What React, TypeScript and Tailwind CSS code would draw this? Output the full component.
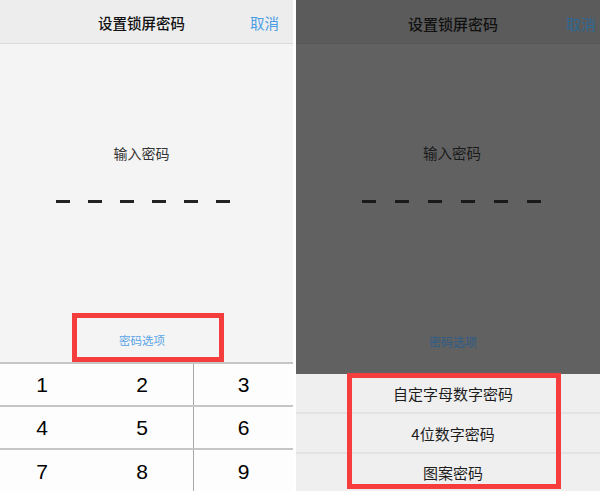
import React from "react";

const cjk = { fontFamily: '"Noto Sans CJK SC", "Noto Sans", sans-serif' };
const num = { fontFamily: '"Liberation Sans", Arial, sans-serif' };

function Dashes({ color, gap, offset }: { color: string; gap: string; offset: string }) {
  return (
    <div className={`flex h-[3px] ${gap} ${offset}`}>
      {[0, 1, 2, 3, 4, 5].map((i) => (
        <div key={i} className={`h-[2.5px] w-[14px] ${color}`} />
      ))}
    </div>
  );
}

function KeyRow({ keys, last }: { keys: string[]; last?: boolean }) {
  return (
    <div className={`flex h-[43px] ${last ? "" : "border-b-2 border-[#c6c6c6]"}`}>
      <div className="flex w-[91px] items-center justify-center pr-[7px] text-[21px] text-black" style={num}>
        {keys[0]}
      </div>
      <div className="flex w-[102px] items-center justify-center text-[21px] text-black" style={num}>
        {keys[1]}
      </div>
      <div className="flex w-[100px] items-center justify-center border-l border-[#a8a8a8] text-[21px] text-black" style={num}>
        {keys[2]}
      </div>
    </div>
  );
}

export default function App() {
  return (
    <div className="flex h-[491px] w-[600px] overflow-hidden bg-white" style={cjk}>
      {/* Left panel */}
      <div className="flex h-full w-[293px] flex-col bg-[#f4f4f4]">
        <div className="flex h-[44px] shrink-0 items-center border-b border-[#dadada] bg-[#ededed] pt-[4px]">
          <div className="pl-[98px] text-[14.5px] font-medium leading-none text-[#111]">设置锁屏密码</div>
          <div className="ml-auto pr-[14px] text-[14.5px] leading-none text-[#4a9ee6]">取消</div>
        </div>
        <div className="flex flex-col">
          <div className="mt-[99px] flex h-[20px] items-center justify-center pr-[10px] text-[14px] leading-none text-[#333]">
            输入密码
          </div>
          <Dashes color="bg-[#222]" gap="gap-[18px]" offset="mt-[37px] ml-[56px]" />
          <div className="ml-[72px] mt-[110px] flex h-[49px] w-[152px] items-center border-[5px] border-[#f53d3d] pl-[42px] pt-[7px]">
            <span className="text-[11.5px] leading-none text-[#5aa4e6]">密码选项</span>
          </div>
        </div>
        <div className="mt-auto flex flex-col border-t-2 border-[#c6c6c6] bg-[#fdfdfd]">
          <KeyRow keys={["1", "2", "3"]} />
          <KeyRow keys={["4", "5", "6"]} />
          <KeyRow keys={["7", "8", "9"]} last />
        </div>
      </div>

      {/* Right panel */}
      <div className="relative ml-[3px] flex h-full w-[304px] flex-col bg-[#616161]">
        <div className="flex h-[44px] shrink-0 items-center border-b border-[#575757] bg-[#5b5b5b] pt-[4px]">
          <div className="pl-[112px] text-[15px] font-medium leading-none text-[#111]">设置锁屏密码</div>
          <div className="ml-auto pr-[4px] text-[15px] leading-none text-[#2f6793]">取消</div>
        </div>
        <div className="flex flex-col">
          <div className="mt-[99px] flex h-[20px] items-center justify-center pl-[8px] text-[14.5px] leading-none text-[#1a1a1a]">
            输入密码
          </div>
          <Dashes color="bg-[#1a1a1a]" gap="gap-[19px]" offset="mt-[37px] ml-[66px]" />
          <div className="mt-[129px] flex h-[20px] items-center pl-[133px]">
            <span className="text-[12px] leading-none text-[#2d5d87]">密码选项</span>
          </div>
        </div>
        <div className="mt-auto flex h-[117px] flex-col bg-[#efefef]">
          <div className="flex h-[40px] items-center justify-center border-b-2 border-[#e3e3e3] pl-[10px] text-[15px] leading-none text-[#1c1c1c]">
            自定字母数字密码
          </div>
          <div className="flex h-[40px] items-center justify-center border-b-2 border-[#e3e3e3] pl-[10px] text-[15px] leading-none text-[#1c1c1c]">
            4位数字密码
          </div>
          <div className="flex flex-1 items-center justify-center pl-[10px] text-[15px] leading-none text-[#1c1c1c]">
            图案密码
          </div>
        </div>
        <div className="pointer-events-none absolute left-[51px] top-[373px] h-[116px] w-[214px] border-[5px] border-[#f53d3d]" />
      </div>
    </div>
  );
}
